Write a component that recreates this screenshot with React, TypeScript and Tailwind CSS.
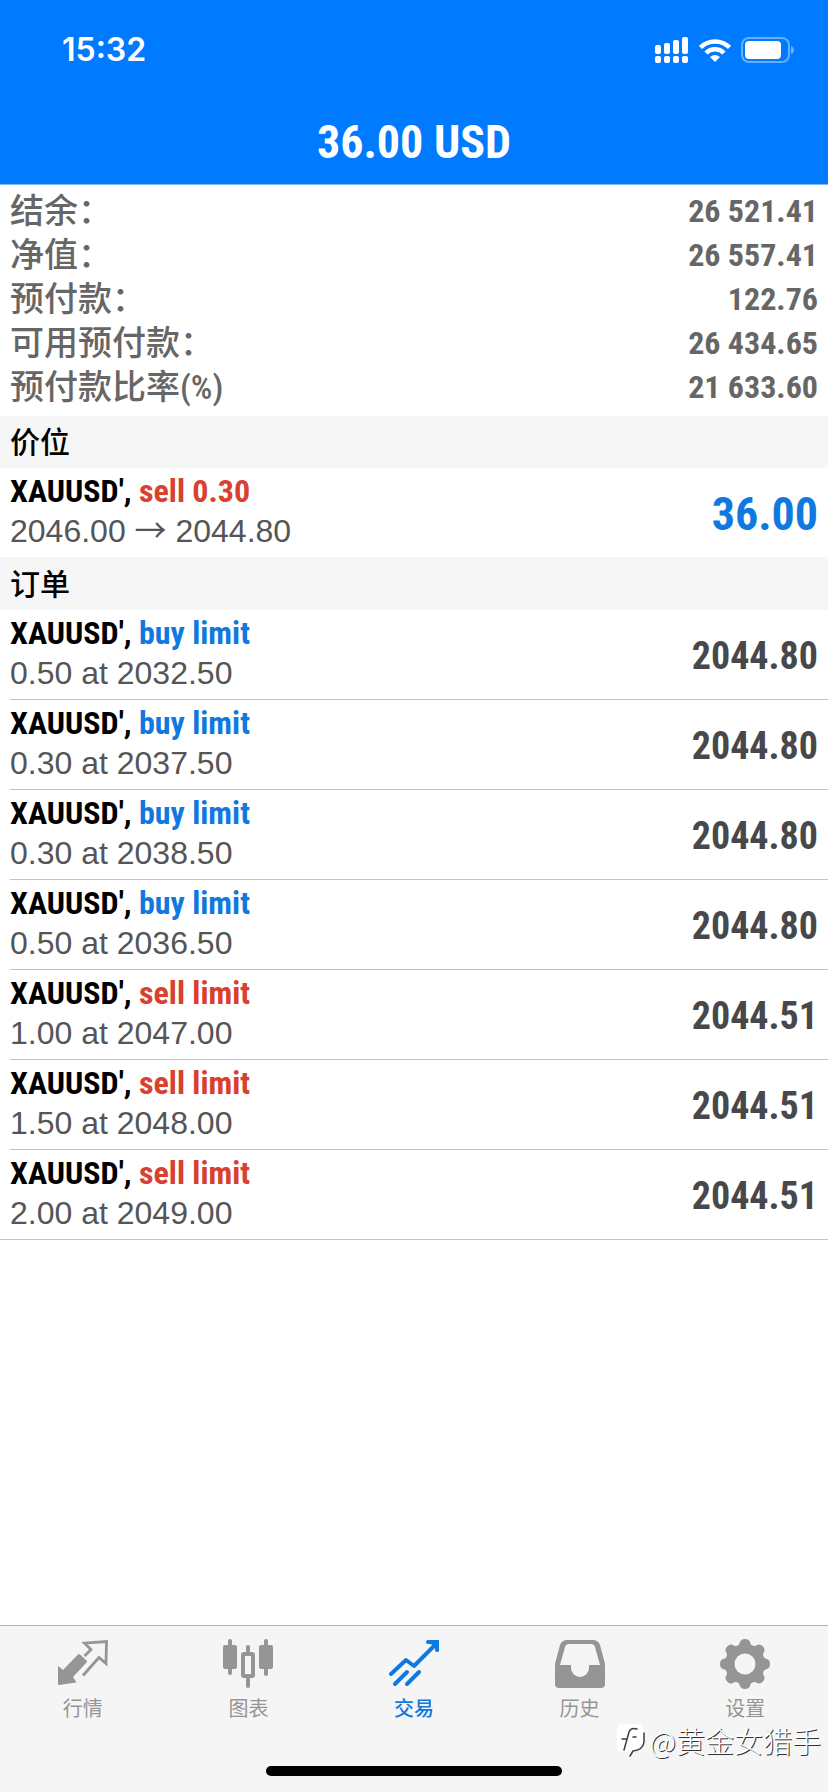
import React, { useState } from 'react';
import { clsx } from 'clsx';

type Side = 'buy' | 'sell';

interface Order {
  side: Side;
  volume: string;
  price: string;
  current: string;
}

const summary = [
  { label: '结余：', value: '26 521.41' },
  { label: '净值：', value: '26 557.41' },
  { label: '预付款：', value: '122.76' },
  { label: '可用预付款：', value: '26 434.65' },
  { label: '预付款比率(%)', value: '21 633.60' }
];

const orders: Order[] = [
  { side: 'buy', volume: '0.50', price: '2032.50', current: '2044.80' },
  { side: 'buy', volume: '0.30', price: '2037.50', current: '2044.80' },
  { side: 'buy', volume: '0.30', price: '2038.50', current: '2044.80' },
  { side: 'buy', volume: '0.50', price: '2036.50', current: '2044.80' },
  { side: 'sell', volume: '1.00', price: '2047.00', current: '2044.51' },
  { side: 'sell', volume: '1.50', price: '2048.00', current: '2044.51' },
  { side: 'sell', volume: '2.00', price: '2049.00', current: '2044.51' }
];

const QuotesIcon = () => <svg width="50" height="50" viewBox="0 0 50 50" fill="currentColor">
    <path d="M20 15.500q1-1 2 0l6.500 6q1 1 0 2L15 38l3.500 5.500L1 46q-1 0-1-1V27l5 4z" />
    <path d="M26.500 17l6.500-6.500-6.500-6.300L48.500 2.500l-.500 22-7-6L25 36.500" fill="none" stroke="currentColor" strokeWidth="2.800" />
  </svg>;

const ChartIcon = () => <svg width="50" height="50" viewBox="0 0 50 50" fill="currentColor">
    <rect x="5" y="0" width="4" height="36" rx="2" />
    <rect x="0" y="6" width="14" height="24" rx="2" />
    <rect x="41" y="0" width="4" height="37" rx="2" />
    <rect x="36" y="6" width="14" height="24" rx="2" />
    <rect x="23" y="6" width="4" height="8" rx="2" />
    <rect x="23" y="38" width="4" height="11" rx="2" />
    <rect x="20" y="15" width="10" height="22" rx="1" fill="none" stroke="currentColor" strokeWidth="4" />
  </svg>;

const TradeIcon = () => <svg width="50" height="50" viewBox="0 0 50 50" fill="none" stroke="currentColor" strokeWidth="4" strokeLinecap="round">
    <path d="M2 35l15-14 8 6L47 5" strokeLinejoin="round" />
    <path d="M6 45l12-12M18 45l12-12" />
    <path d="M39 3h9v8" />
    <path d="M38 1h12v12l-4-4-4-4z" fill="currentColor" stroke="none" />
  </svg>;

const HistoryIcon = () => <svg width="50" height="50" viewBox="0 0 50 50" fill="currentColor">
    <path fillRule="evenodd" d="M12 1h26q5 0 7 5l4 15q1 3 1 6v18q0 4-4 4H4q-4 0-4-4V27q0-3 1-6L5 6q2-5 7-5zM14 5q-3 0-4 3L5 26h11v3a9 9 0 0 0 18 0v-3h11L40 8q-1-3-4-3z" />
  </svg>;

const SettingsIcon = () => <svg width="50" height="50" viewBox="0 0 50 50">
    <g fill="currentColor">
      <circle cx="25" cy="25" r="20" />
      {[0, 45, 90, 135, 180, 225, 270, 315].map(angle => <path key={angle} transform={`rotate(${angle} 25 25)`} d="M16 8q3-1 4-5 1-3 5-3t5 3q1 4 4 5z" />)}
    </g>
    <circle cx="25" cy="25" r="10.500" fill="#f5f5f5" />
  </svg>;

const tabs = [
  { id: 'quotes', label: '行情', Icon: QuotesIcon },
  { id: 'chart', label: '图表', Icon: ChartIcon },
  { id: 'trade', label: '交易', Icon: TradeIcon },
  { id: 'history', label: '历史', Icon: HistoryIcon },
  { id: 'settings', label: '设置', Icon: SettingsIcon }
];

const StatusBar = () => <div className="flex h-[100px] items-center justify-between pr-[33px] pl-[62px]">
    <span className="font-['Inter',sans-serif] text-[32px] font-semibold">15:32</span>
    <div className="flex items-center gap-[10px]">
      <svg width="34" height="27" viewBox="0 0 34 27" fill="currentColor">
        <rect x="0" y="8" width="6" height="9" rx="2" />
        <rect x="9" y="6" width="6" height="11" rx="2" />
        <rect x="18" y="3" width="6" height="14" rx="2" />
        <rect x="27" y="0" width="6" height="17" rx="2" />
        {[0, 9, 18, 27].map(x => <rect key={x} x={x} y="19" width="6" height="7" rx="2" />)}
      </svg>
      <svg width="32" height="25" viewBox="0 0 32 25" fill="none" stroke="currentColor">
        <path d="M1.500 9.500a20.500 20.500 0 0 1 29 0" strokeWidth="4.500" />
        <path d="M7 15a12.700 12.700 0 0 1 18 0" strokeWidth="4.500" />
        <path d="M16 24l-5-5q5-4 10 0z" fill="currentColor" stroke="none" />
      </svg>
      <svg width="54" height="26" viewBox="0 0 54 26" fill="none">
        <rect x="1" y="1" width="47" height="24" rx="7" stroke="#67b0fb" strokeWidth="2" />
        <rect x="4" y="4" width="36" height="18" rx="4" fill="currentColor" />
        <path d="M50 9q3 1 3 4t-3 4z" fill="#67b0fb" />
      </svg>
    </div>
  </div>;

const SectionTitle = ({ children }: { children: React.ReactNode }) => <h2 className="flex h-[52px] items-center bg-[#f6f6f6] px-[10px] text-[30px] font-medium text-black">
    {children}
  </h2>;

interface TradeRowProps {
  side: Side;
  action: string;
  detail: React.ReactNode;
  value: React.ReactNode;
}

const TradeRow = ({ side, action, detail, value }: TradeRowProps) => <div className="flex h-[89px] items-center justify-between pr-[10px]">
    <div className="pb-[3px]">
      <p className="font-['Roboto_Condensed','Liberation_Sans',sans-serif] text-[32px] leading-[40px] font-bold text-black">
        XAUUSD', <span className={side === 'buy' ? 'text-[#1079e0]' : 'text-[#d8402f]'}>{action}</span>
      </p>
      <p className="text-[32px] leading-[41px] text-[#555557]">{detail}</p>
    </div>
    <div className="pt-1">{value}</div>
  </div>;

export default function App() {
  const [activeTab, setActiveTab] = useState('trade');
  return <div className="flex min-h-screen flex-col bg-white font-['Liberation_Sans','Noto_Sans_CJK_SC',sans-serif]">
      <header className="border-b border-[#80bcfd] bg-[#007aff] text-white">
        <StatusBar />
        <h1 className="h-[84px] text-center font-['Roboto_Condensed','Liberation_Sans',sans-serif] text-[46px] leading-[84px] font-bold">36.00 USD</h1>
      </header>
      <main className="flex-1">
        <dl className="px-[10px] pt-1 pb-[7px] font-['Roboto_Condensed','Noto_Sans_CJK_SC',sans-serif] text-[#666666]">
          {summary.map(item => <div key={item.label} className="flex h-[44px] items-center justify-between">
              <dt className="text-[34px] leading-[44px] font-medium">{item.label}</dt>
              <dd className="text-[32px] leading-[44px] font-bold">{item.value}</dd>
            </div>)}
        </dl>
        <SectionTitle>价位</SectionTitle>
        <div className="border-b border-[#f6f6f6] pl-[10px]">
          <TradeRow side="sell" action="sell 0.30" detail={<>2046.00 <span className="font-['Noto_Sans_CJK_SC',sans-serif] leading-none">→</span> 2044.80</>} value={<span className="font-['Roboto_Condensed','Liberation_Sans',sans-serif] text-[46px] font-bold text-[#1079e0]">36.00</span>} />
        </div>
        <SectionTitle>订单</SectionTitle>
        <ul className="border-b border-[#c3c3c5]">
          {orders.map((order, index) => <li key={order.price} className="pl-[10px]">
              <div className={clsx(index < orders.length - 1 && 'border-b border-[#c3c3c5]')}>
                <TradeRow side={order.side} action={`${order.side} limit`} detail={`${order.volume} at ${order.price}`} value={<span className="font-['Roboto_Condensed','Liberation_Sans',sans-serif] text-[38px] font-bold text-[#48484b]">{order.current}</span>} />
              </div>
            </li>)}
        </ul>
      </main>
      <footer className="relative border-t border-[#b2b2b2] bg-[#f5f5f5]">
        <nav className="flex h-[140px] pt-[13px]">
          {tabs.map(({ id, label, Icon }) => <button key={id} type="button" onClick={() => setActiveTab(id)} className={clsx('flex flex-1 flex-col items-center gap-[6px]', activeTab === id ? 'font-medium text-[#1079e0]' : 'text-[#959595]')}>
              <Icon />
              <span className="text-[20px] leading-[28px]">{label}</span>
            </button>)}
        </nav>
        <div className="mx-auto mb-4 h-[10px] w-[296px] rounded-full bg-black" />
        <div className="absolute right-[7px] bottom-8 flex items-center gap-1 text-white">
          <svg width="30" height="34" viewBox="0 0 30 34" fill="none" strokeLinecap="round" strokeLinejoin="round">
            <path d="M7 1h15q6 0 6 7v12q0 7-11 10l-4 2v-3H7q-6 0-6-6V7q0-6 6-6z" fill="white" />
            <path d="M8 27l5-18q2-5 8-3M6 16h4M17 14h3M28 10v9q-1 8-11 9l-3 5" stroke="#3d3d3d" strokeWidth="1.500" />
          </svg>
          <span className="font-['Noto_Sans_CJK_SC',sans-serif] text-[29px] leading-[40px] font-light [text-shadow:1px_1px_0_#333333]">@黄金女猎手</span>
        </div>
      </footer>
    </div>;
}
